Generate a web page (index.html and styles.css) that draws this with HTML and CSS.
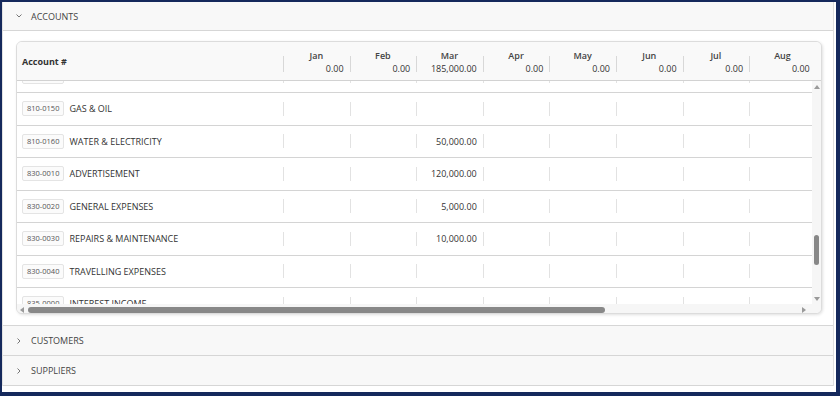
FILE: index.html
```html
<!DOCTYPE html>
<html lang="en">
<head>
    <meta charset="UTF-8">
    <meta name="viewport" content="width=device-width, initial-scale=1.0">
    <title>Budget</title>
    <link rel="stylesheet" href="styles.css">
</head>
<body>
    <div class="frame">
        <div class="acc">
            <div class="acc-head">
                <svg class="chev" viewBox="0 0 8 8"><polyline points="1.5,2.5 4,5 6.5,2.5"/></svg>
                <span>ACCOUNTS</span>
            </div>
            <div class="acc-body">
                <div class="grid">
                    <div class="grid-head">
                        <div class="hcell first">Account #</div>
                        <div class="hcell month"><span class="mname">Jan</span><span class="mval">0.00</span></div>
                        <div class="hcell month"><span class="mname">Feb</span><span class="mval">0.00</span></div>
                        <div class="hcell month"><span class="mname">Mar</span><span class="mval">185,000.00</span></div>
                        <div class="hcell month"><span class="mname">Apr</span><span class="mval">0.00</span></div>
                        <div class="hcell month"><span class="mname">May</span><span class="mval">0.00</span></div>
                        <div class="hcell month"><span class="mname">Jun</span><span class="mval">0.00</span></div>
                        <div class="hcell month"><span class="mname">Jul</span><span class="mval">0.00</span></div>
                        <div class="hcell month"><span class="mname">Aug</span><span class="mval">0.00</span></div>
                    </div>
                    <div class="grid-main">
                        <div class="viewport">
                            <div class="rows">
                                <div class="row">
                                    <div class="acct"><span class="code">810-0140</span><span class="name">FUEL</span></div>
                                    <div class="cell"></div><div class="cell"></div><div class="cell"></div><div class="cell"></div><div class="cell"></div><div class="cell"></div><div class="cell"></div><div class="cell"></div>
                                </div>
                                <div class="row">
                                    <div class="acct"><span class="code">810-0150</span><span class="name">GAS &amp; OIL</span></div>
                                    <div class="cell"></div><div class="cell"></div><div class="cell"></div><div class="cell"></div><div class="cell"></div><div class="cell"></div><div class="cell"></div><div class="cell"></div>
                                </div>
                                <div class="row">
                                    <div class="acct"><span class="code">810-0160</span><span class="name">WATER &amp; ELECTRICITY</span></div>
                                    <div class="cell"></div><div class="cell"></div><div class="cell">50,000.00</div><div class="cell"></div><div class="cell"></div><div class="cell"></div><div class="cell"></div><div class="cell"></div>
                                </div>
                                <div class="row">
                                    <div class="acct"><span class="code">830-0010</span><span class="name">ADVERTISEMENT</span></div>
                                    <div class="cell"></div><div class="cell"></div><div class="cell">120,000.00</div><div class="cell"></div><div class="cell"></div><div class="cell"></div><div class="cell"></div><div class="cell"></div>
                                </div>
                                <div class="row">
                                    <div class="acct"><span class="code">830-0020</span><span class="name">GENERAL EXPENSES</span></div>
                                    <div class="cell"></div><div class="cell"></div><div class="cell">5,000.00</div><div class="cell"></div><div class="cell"></div><div class="cell"></div><div class="cell"></div><div class="cell"></div>
                                </div>
                                <div class="row">
                                    <div class="acct"><span class="code">830-0030</span><span class="name">REPAIRS &amp; MAINTENANCE</span></div>
                                    <div class="cell"></div><div class="cell"></div><div class="cell">10,000.00</div><div class="cell"></div><div class="cell"></div><div class="cell"></div><div class="cell"></div><div class="cell"></div>
                                </div>
                                <div class="row">
                                    <div class="acct"><span class="code">830-0040</span><span class="name">TRAVELLING EXPENSES</span></div>
                                    <div class="cell"></div><div class="cell"></div><div class="cell"></div><div class="cell"></div><div class="cell"></div><div class="cell"></div><div class="cell"></div><div class="cell"></div>
                                </div>
                                <div class="row">
                                    <div class="acct"><span class="code">835-0000</span><span class="name">INTEREST INCOME</span></div>
                                    <div class="cell"></div><div class="cell"></div><div class="cell"></div><div class="cell"></div><div class="cell"></div><div class="cell"></div><div class="cell"></div><div class="cell"></div>
                                </div>
                            </div>
                        </div>
                        <div class="vbar">
                            <div class="arrow up"></div>
                            <div class="vtrack"><div class="vthumb"></div></div>
                            <div class="arrow down"></div>
                        </div>
                    </div>
                    <div class="hbar">
                        <div class="arrow left"></div>
                        <div class="htrack"><div class="hthumb"></div></div>
                        <div class="arrow right"></div>
                        <div class="corner"></div>
                    </div>
                </div>
            </div>
        </div>
        <div class="acc">
            <div class="acc-head">
                <svg class="chev" viewBox="0 0 8 8"><polyline points="2.5,1.5 5,4 2.5,6.5"/></svg>
                <span>CUSTOMERS</span>
            </div>
        </div>
        <div class="acc">
            <div class="acc-head">
                <svg class="chev" viewBox="0 0 8 8"><polyline points="2.5,1.5 5,4 2.5,6.5"/></svg>
                <span>SUPPLIERS</span>
            </div>
        </div>
    </div>
</body>
</html>
```
FILE: styles.css
```css
*{
    margin: 0;
    padding: 0;
    box-sizing: border-box;
}
body{
    background-color: #15295c;
    font-family: "Open Sans", "Liberation Sans", sans-serif;
    color: #333;
}
.frame{
    width: 834px;
    height: 390px;
    margin: 2px 0 0 2px;
    background-color: #fff;
    padding-right: 2px;
}
.acc{
    border-left: 1px solid #e2e2e2;
    border-right: 1px solid #dedede;
}
.acc-head{
    height: 29px;
    background-color: #f8f8f8;
    border-bottom: 1px solid #d6d6d6;
    display: flex;
    align-items: center;
    padding-left: 12px;
    font-size: 9px;
    color: #444;
}
.acc + .acc .acc-head{
    height: 30px;
}
.chev{
    width: 8px;
    height: 8px;
    margin-right: 8px;
    fill: none;
    stroke: #666;
    stroke-width: 0.9;
}
.acc-body{
    height: 295px;
    padding: 10px 11px 0 13px;
    border-bottom: 1px solid #d6d6d6;
}

/* grid card */
.grid{
    height: 273px;
    border: 1px solid #dcdcdc;
    border-radius: 6px;
    background-color: #fff;
    box-shadow: 1px 1px 3px rgba(0,0,0,0.12);
    overflow: hidden;
    display: flex;
    flex-direction: column;
}
.grid-head{
    height: 39px;
    flex: none;
    display: flex;
    background-color: #f9f9f9;
    border-bottom: 1px solid #d2d2d2;
    overflow: hidden;
}
.hcell{
    flex: 0 0 66.6px;
}
.hcell.first{
    flex: 0 0 266px;
    display: flex;
    align-items: center;
    padding-left: 5px;
    font-weight: 700;
    font-size: 9px;
    color: #333;
}
.month{
    display: flex;
    flex-direction: column;
    padding: 7px 6px 0 6px;
    background: linear-gradient(#d8d8d8, #d8d8d8) 0 14px / 1px 16px no-repeat;
}
.mname{
    text-align: center;
    font-size: 9px;
    line-height: 13px;
    font-weight: 600;
    color: #444;
}
.mval{
    text-align: right;
    font-size: 9px;
    line-height: 13px;
    color: #333;
}

.grid-main{
    flex: none;
    height: 223px;
    display: flex;
}
.viewport{
    flex: 1;
    overflow: hidden;
}
.rows{
    margin-top: -20.5px;
}
.row{
    height: 32.5px;
    display: flex;
    border-bottom: 1px solid #d4d4d4;
    width: max-content;
}
.acct{
    flex: 0 0 266px;
    display: flex;
    align-items: center;
    padding-left: 5px;
}
.code{
    font-size: 7.5px;
    line-height: 13px;
    padding: 0 4px;
    border: 1px solid #e4e4e4;
    border-radius: 2px;
    background-color: #fbfbfb;
    color: #555;
    margin-right: 5px;
}
.name{
    font-size: 9px;
    color: #333;
}
.cell{
    flex: 0 0 66.6px;
    display: flex;
    align-items: center;
    justify-content: flex-end;
    padding-right: 6px;
    font-size: 9px;
    color: #333;
    background: linear-gradient(#e2e2e2, #e2e2e2) 0 center / 1px 14px no-repeat;
}

/* fake scrollbars */
.vbar{
    flex: 0 0 9px;
    display: flex;
    flex-direction: column;
    background-color: #f6f6f6;
}
.arrow{
    width: 0;
    height: 0;
    border: 3px solid transparent;
}
.arrow.up{
    border-bottom: 4px solid #9a9a9a;
    border-top-width: 0;
    margin: 4px auto 0;
}
.arrow.down{
    border-top: 4px solid #9a9a9a;
    border-bottom-width: 0;
    margin: 0 auto 3px;
}
.vtrack{
    flex: 1;
    padding: 0 2px;
}
.vthumb{
    margin-top: 146px;
    height: 30px;
    border-radius: 3px;
    background-color: #888;
}
.hbar{
    flex: none;
    height: 11px;
    display: flex;
    align-items: center;
    background-color: #f6f6f6;
}
.arrow.left{
    border-right: 4px solid #9a9a9a;
    border-left-width: 0;
    margin: 0 4px 0 3px;
}
.arrow.right{
    border-left: 4px solid #9a9a9a;
    border-right-width: 0;
    margin: 0 6px 0 4px;
}
.htrack{
    flex: 1;
}
.hthumb{
    width: 577px;
    height: 6px;
    border-radius: 3px;
    background-color: #888;
}
.corner{
    flex: 0 0 9px;
}
```
